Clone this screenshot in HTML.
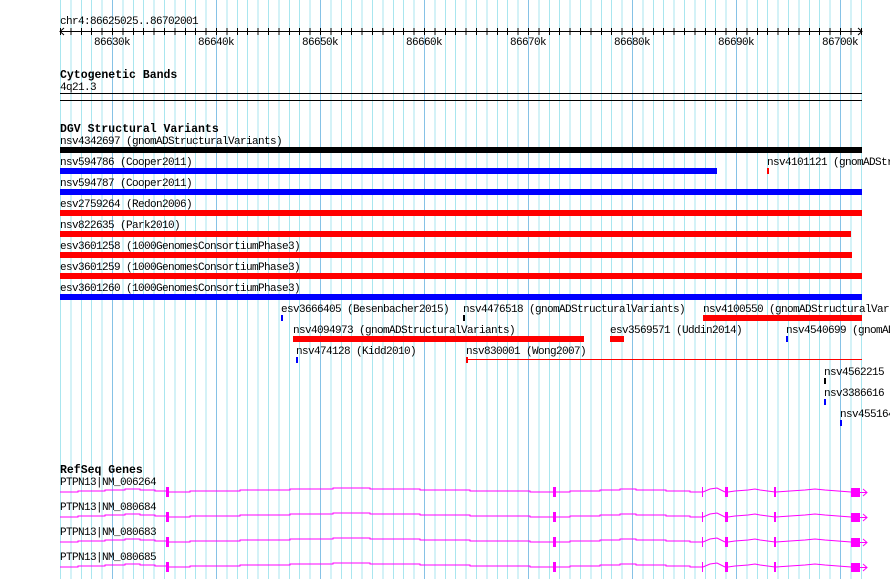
<!DOCTYPE html>
<html><head><meta charset="utf-8"><style>
body{margin:0;background:#fff;width:890px;height:579px;overflow:hidden;position:relative}
.grid{position:absolute;left:60px;top:0;width:803px;height:579px;
background-image:repeating-linear-gradient(to right,transparent 0 52px,#86c2e6 52px 53px,transparent 53px 104px),repeating-linear-gradient(to right,#a9e6ef 0 1px,transparent 1px 10.4px);}
.ticks{position:absolute;left:60px;top:28px;width:803px;height:7px;
background-image:repeating-linear-gradient(to right,#000 0 1px,transparent 1px 10.4px);}
svg{position:absolute;left:0;top:0}
text{font-family:"Liberation Mono",monospace;font-size:11px;letter-spacing:-0.6px;fill:#000}
.b{font-weight:bold;font-size:11.5px;letter-spacing:0}
</style></head><body>
<div class="grid"></div>
<div class="ticks"></div>
<svg width="890" height="579" xmlns="http://www.w3.org/2000/svg">
<text x="60" y="24">chr4:86625025..86702001</text>
<line x1="60" y1="31.5" x2="862" y2="31.5" stroke="#000"/>
<polyline points="64,28 60,31.5 64,35" fill="none" stroke="#000"/>
<polyline points="858,28 862,31.5 858,35" fill="none" stroke="#000"/>
<g text-anchor="middle">
<text x="112" y="45">86630k</text><text x="216" y="45">86640k</text><text x="320" y="45">86650k</text><text x="424" y="45">86660k</text><text x="528" y="45">86670k</text><text x="632" y="45">86680k</text><text x="736" y="45">86690k</text><text x="840" y="45">86700k</text>
</g>
<text class="b" x="60" y="78">Cytogenetic Bands</text>
<text x="60" y="90">4q21.3</text>
<rect x="60" y="93" width="802" height="1" fill="#000"/>
<rect x="60" y="100" width="802" height="1" fill="#000"/>

<text class="b" x="60" y="132">DGV Structural Variants</text>
<text x="60" y="144">nsv4342697 (gnomADStructuralVariants)</text>
<rect x="60" y="147" width="802" height="6" fill="#000"/>
<text x="60" y="165">nsv594786 (Cooper2011)</text>
<rect x="60" y="168" width="657" height="6" fill="#00f"/>
<text x="767" y="165">nsv4101121 (gnomADStr</text>
<rect x="767" y="168" width="2" height="6" fill="#f00"/>
<text x="60" y="186">nsv594787 (Cooper2011)</text>
<rect x="60" y="189" width="802" height="6" fill="#00f"/>
<text x="60" y="207">esv2759264 (Redon2006)</text>
<rect x="60" y="210" width="802" height="6" fill="#f00"/>
<text x="60" y="228">nsv822635 (Park2010)</text>
<rect x="60" y="231" width="791" height="6" fill="#f00"/>
<text x="60" y="249">esv3601258 (1000GenomesConsortiumPhase3)</text>
<rect x="60" y="252" width="792" height="6" fill="#f00"/>
<text x="60" y="270">esv3601259 (1000GenomesConsortiumPhase3)</text>
<rect x="60" y="273" width="802" height="6" fill="#f00"/>
<text x="60" y="291">esv3601260 (1000GenomesConsortiumPhase3)</text>
<rect x="60" y="294" width="802" height="6" fill="#00f"/>

<text x="281" y="312">esv3666405 (Besenbacher2015)</text>
<rect x="281" y="315" width="2" height="6" fill="#00f"/>
<text x="463" y="312">nsv4476518 (gnomADStructuralVariants)</text>
<rect x="463" y="315" width="2" height="6" fill="#000"/>
<text x="703" y="312">nsv4100550 (gnomADStructuralVar</text>
<rect x="703" y="315" width="159" height="6" fill="#f00"/>

<text x="293" y="333">nsv4094973 (gnomADStructuralVariants)</text>
<rect x="293" y="336" width="291" height="6" fill="#f00"/>
<text x="610" y="333">esv3569571 (Uddin2014)</text>
<rect x="610" y="336" width="14" height="6" fill="#f00"/>
<text x="786" y="333">nsv4540699 (gnomAD</text>
<rect x="786" y="336" width="2" height="6" fill="#00f"/>

<text x="296" y="354">nsv474128 (Kidd2010)</text>
<rect x="296" y="357" width="2" height="6" fill="#00f"/>
<text x="466" y="354">nsv830001 (Wong2007)</text>
<rect x="466" y="357" width="2" height="6" fill="#f00"/>
<rect x="466" y="359" width="396" height="1" fill="#f00"/>

<text x="824" y="375">nsv4562215</text>
<rect x="824" y="378" width="2" height="6" fill="#000"/>
<text x="824" y="396">nsv3386616</text>
<rect x="824" y="399" width="2" height="6" fill="#00f"/>
<text x="840" y="417">nsv455164</text>
<rect x="840" y="420" width="2" height="6" fill="#00f"/>

<text class="b" x="60" y="473">RefSeq Genes</text>
<defs>
<g id="gene" fill="#f0f" stroke="none">
<polyline fill="none" stroke="#f0f" points="60,492 78,492 78,491 105,491 105,490 125,490 125,489 140,489 140,490 155,490 155,491 166,491"/>
<rect x="166" y="487" width="3" height="10"/>
<polyline fill="none" stroke="#f0f" points="169,492 190,492 190,491 240,491 240,490 290,490 290,489 333,489 333,488 370,488 370,489 420,489 420,490 470,490 470,491 530,491 530,492 553,492"/>
<rect x="553" y="487" width="3" height="10"/>
<polyline fill="none" stroke="#f0f" points="556,492 570,492 570,491 600,491 600,490 620,490 620,489 636,489 636,490 666,490 666,491 690,491 690,492 702,492"/>
<rect x="702" y="487" width="1" height="10"/>
<polyline fill="none" stroke="#f0f" points="703,492 710,489 717,488 725,492"/>
<rect x="725" y="487" width="3" height="10"/>
<polyline fill="none" stroke="#f0f" points="728,492 735,491 748,490 755,489 760,490 775,492"/>
<rect x="774" y="487" width="2" height="10"/>
<polyline fill="none" stroke="#f0f" points="776,492 790,491 805,490 815,489 825,490 838,491 851,492"/>
<rect x="851" y="488" width="9" height="9"/>
<line x1="860" y1="492.5" x2="867" y2="492.5" stroke="#f0f"/>
<polyline fill="none" stroke="#f0f" points="863,489 867,492.5 863,496"/>
</g>
</defs>
<text x="60" y="485">PTPN13|NM_006264</text>
<use href="#gene"/>
<text x="60" y="510">PTPN13|NM_080684</text>
<use href="#gene" y="25"/>
<text x="60" y="535">PTPN13|NM_080683</text>
<use href="#gene" y="50"/>
<text x="60" y="560">PTPN13|NM_080685</text>
<use href="#gene" y="75"/>
</svg>
</body></html>
